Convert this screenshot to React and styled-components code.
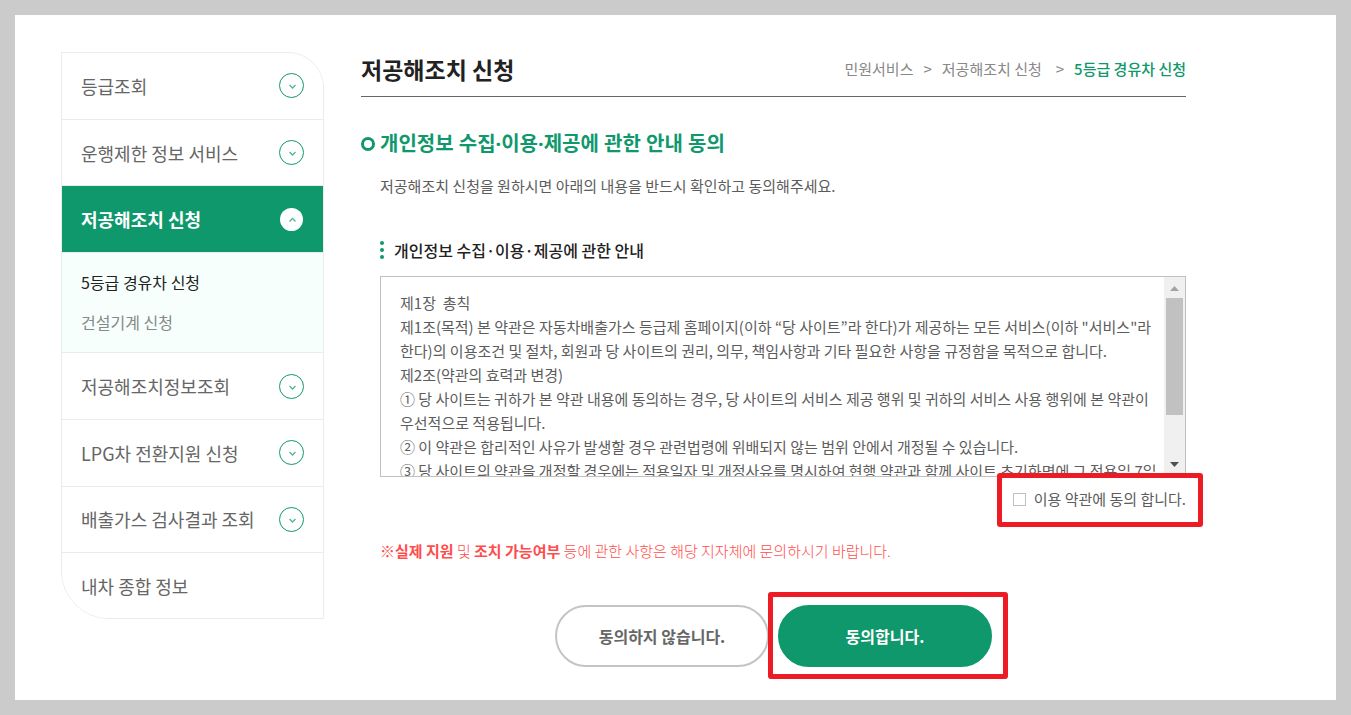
import React, { useState } from 'react'
import styled, { createGlobalStyle } from 'styled-components'

const menus = [
  { name: '등급조회', arrow: true },
  { name: '운행제한 정보 서비스', arrow: true },
  { name: '저공해조치 신청', arrow: true, subs: ['5등급 경유차 신청', '건설기계 신청'] },
  { name: '저공해조치정보조회', arrow: true },
  { name: 'LPG차 전환지원 신청', arrow: true },
  { name: '배출가스 검사결과 조회', arrow: true },
  { name: '내차 종합 정보', arrow: false },
]

const terms = [
  '제1장  총칙',
  '제1조(목적) 본 약관은 자동차배출가스 등급제 홈페이지(이하 “당 사이트”라 한다)가 제공하는 모든 서비스(이하 "서비스"라',
  '한다)의 이용조건 및 절차, 회원과 당 사이트의 권리, 의무, 책임사항과 기타 필요한 사항을 규정함을 목적으로 합니다.',
  '제2조(약관의 효력과 변경)',
  '① 당 사이트는 귀하가 본 약관 내용에 동의하는 경우, 당 사이트의 서비스 제공 행위 및 귀하의 서비스 사용 행위에 본 약관이',
  '우선적으로 적용됩니다.',
  '② 이 약관은 합리적인 사유가 발생할 경우 관련법령에 위배되지 않는 범위 안에서 개정될 수 있습니다.',
  '③ 당 사이트의 약관을 개정할 경우에는 적용일자 및 개정사유를 명시하여 현행 약관과 함께 사이트 초기화면에 그 적용일 7일',
]

const Arrow = ({ open }) => (
  <svg width="25" height="25" viewBox="0 0 25 25" fill="none" aria-hidden="true">
    <circle cx="12.5" cy="12.5" r={open ? 11.5 : 12} fill="#fff" stroke={open ? 'none' : '#10986d'} />
    <path d={open ? 'M10.5 14.5L13.5 11.5L16.5 14.5' : 'M10.5 12L13.5 15L16.5 12'} stroke="#4fb694" strokeWidth="1.3" />
  </svg>
)

const App = () => {
  const [agree, setAgree] = useState(false)

  return <>
    <GlobalStyle />
    <Page>
      <Sidebar>
        {menus.map(({ name, arrow, subs }) => (
          <React.Fragment key={name}>
            <MenuLink href="#" $active={!!subs}>
              {name}
              {arrow && <Arrow open={!!subs} />}
            </MenuLink>
            {subs && <SubMenu>
              {subs.map((sub, i) => <SubLink href="#" key={sub} $active={i === 0}>{sub}</SubLink>)}
            </SubMenu>}
          </React.Fragment>
        ))}
      </Sidebar>
      <Main>
        <Header>
          <h1>저공해조치 신청</h1>
          <Breadcrumb>
            <a href="#">민원서비스</a>
            <span>&gt;</span>
            <a href="#">저공해조치 신청</a>
            <span className="last">&gt;</span>
            <a href="#" className="current">5등급 경유차 신청</a>
          </Breadcrumb>
        </Header>
        <Heading>
          <svg width="14" height="14" viewBox="0 0 14 14" aria-hidden="true">
            <circle cx="7" cy="7" r="5.5" fill="none" stroke="#10986d" strokeWidth="3" />
          </svg>
          개인정보 수집·이용·제공에 관한 안내 동의
        </Heading>
        <Content>
          <Intro>저공해조치 신청을 원하시면 아래의 내용을 반드시 확인하고 동의해주세요.</Intro>
          <SubHeading>
            <svg width="4" height="18" viewBox="0 0 4 18" fill="#10986d" aria-hidden="true">
              <circle cx="2" cy="2" r="2" />
              <circle cx="2" cy="9" r="2" />
              <circle cx="2" cy="16" r="2" />
            </svg>
            개인정보 수집·이용·제공에 관한 안내
          </SubHeading>
          <TermsBox>
            <TermsText tabIndex={0}>
              {terms.map(line => <p key={line}>{line}</p>)}
            </TermsText>
            <ScrollBar aria-hidden="true">
              <svg width="9" height="5" viewBox="0 0 9 5"><path d="M0 5L4.5 0L9 5Z" fill="#a3a3a3" /></svg>
              <Thumb />
              <svg width="9" height="5" viewBox="0 0 9 5"><path d="M0 0L4.5 5L9 0Z" fill="#505050" /></svg>
            </ScrollBar>
          </TermsBox>
          <AgreeRow>
            <AgreeLabel htmlFor="agree">
              <input id="agree" type="checkbox" checked={agree} onChange={e => setAgree(e.target.checked)} />
              이용 약관에 동의 합니다.
            </AgreeLabel>
          </AgreeRow>
          <Notice>※<b>실제 지원</b> 및 <b>조치 가능여부</b> 등에 관한 사항은 해당 지자체에 문의하시기 바랍니다.</Notice>
        </Content>
        <Buttons>
          <Button type="button">동의하지 않습니다.</Button>
          <Marked>
            <Button type="button" $primary>동의합니다.</Button>
          </Marked>
        </Buttons>
      </Main>
    </Page>
  </>
}

const GlobalStyle = createGlobalStyle`
  * {
    box-sizing: border-box;
    margin: 0;
    padding: 0;
  }
  body {
    background: #cbcbcb;
    color: #5c5c5c;
    font-family: 'Noto Sans CJK KR', 'Noto Sans', sans-serif;
    font-size: 15px;
    line-height: 24px;
  }
  a {
    color: inherit;
    text-decoration: none;
  }
`

const Page = styled.div`
  display: flex;
  align-items: flex-start;
  gap: 37px;
  min-height: calc(100vh - 30px);
  margin: 15px;
  padding: 37px 150px 32px 46px;
  background: #fff;
`

const Sidebar = styled.nav`
  display: flex;
  flex-direction: column;
  flex: none;
  width: 263px;
  min-height: 567px;
  border: 1px solid #ebebeb;
  border-radius: 0 36px 0 48px;
  overflow: hidden;
`

const MenuLink = styled.a`
  display: flex;
  flex: 1;
  align-items: center;
  justify-content: space-between;
  padding: 0 19px;
  font-size: 18px;
  font-weight: ${({ $active }) => $active ? 700 : 400};
  color: ${({ $active }) => $active ? '#fff' : '#666'};
  background: ${({ $active }) => $active ? '#10986d' : '#fff'};
  border-bottom: 1px solid #ebebeb;
  &:last-child {
    border-bottom: 0;
  }
`

const SubMenu = styled.div`
  display: flex;
  flex-direction: column;
  gap: 16px;
  padding: 17px 19px 18px;
  background: #f6fffc;
  border-bottom: 1px solid #ebebeb;
`

const SubLink = styled.a`
  font-size: 16px;
  color: ${({ $active }) => $active ? '#222' : '#888'};
`

const Main = styled.main`
  flex: 1;
  min-width: 0;
`

const Header = styled.header`
  display: flex;
  justify-content: space-between;
  align-items: flex-start;
  height: 45px;
  border-bottom: 1px solid #666;
  h1 {
    font-size: 23px;
    line-height: 34px;
    font-weight: 700;
    color: #222;
  }
`

const Breadcrumb = styled.nav`
  display: flex;
  gap: 10px;
  line-height: 34px;
  color: #888;
  .last {
    margin-left: 4px;
  }
  .current {
    color: #10986d;
    font-weight: 500;
  }
`

/* Noto Sans first, its middle dot is the narrow one */
const Heading = styled.h2`
  display: flex;
  align-items: center;
  gap: 5px;
  margin-top: 32px;
  font-family: 'Noto Sans', 'Noto Sans CJK KR', sans-serif;
  font-size: 20px;
  line-height: 30px;
  font-weight: 700;
  color: #10986d;
`

const Content = styled.section`
  padding-left: 19px;
`

const Intro = styled.p`
  margin-top: 15px;
`

const SubHeading = styled.h3`
  display: flex;
  align-items: center;
  gap: 10px;
  margin: 40px 0 14px;
  font-size: 16px;
  line-height: 24px;
  font-weight: 500;
  color: #222;
`

const TermsBox = styled.div`
  display: flex;
  height: 201px;
  border: 1px solid #c0c0c0;
`

const TermsText = styled.div`
  flex: 1;
  min-width: 0;
  padding: 14px 0 0 19px;
  overflow: hidden;
  white-space: pre-wrap;
`

const ScrollBar = styled.div`
  display: flex;
  flex-direction: column;
  align-items: center;
  width: 21px;
  padding: 9px 0;
  background: #f0f0f0;
  svg:last-child {
    margin-top: auto;
  }
`

const Thumb = styled.div`
  width: 17px;
  height: 117px;
  margin-top: 7px;
  background: #c1c1c1;
`

const AgreeRow = styled.div`
  display: flex;
  justify-content: flex-end;
  margin-top: 10px;
`

/* red outline lying over the neighbouring content */
const outline = `
  position: relative;
  &::after {
    content: '';
    position: absolute;
    border: 5px solid #ed1c24;
    border-radius: 3px;
    pointer-events: none;
  }
`

const AgreeLabel = styled.label`
  display: flex;
  align-items: center;
  gap: 8px;
  ${outline}
  &::after {
    inset: -14px -17px -16px -16px;
  }
  input {
    appearance: none;
    width: 13px;
    height: 13px;
    background: #fff;
    border: 1px solid #c0c0c0;
  }
  input:checked {
    background: #10986d;
  }
`

const Notice = styled.p`
  margin-top: 28px;
  font-weight: 300;
  color: #ff4c4c;
  b {
    font-weight: 700;
  }
`

const Buttons = styled.div`
  display: flex;
  justify-content: center;
  gap: 9px;
  margin-top: 42px;
`

const Marked = styled.div`
  ${outline}
  &::after {
    inset: -13px -16px -12px -10px;
  }
`

const Button = styled.button`
  width: 214px;
  height: 62px;
  font-family: inherit;
  font-size: 16px;
  font-weight: 700;
  color: ${({ $primary }) => $primary ? '#fff' : '#666'};
  background: ${({ $primary }) => $primary ? '#10986d' : '#fff'};
  border: 2px solid ${({ $primary }) => $primary ? '#10986d' : '#c4c4c4'};
  border-radius: 31px;
  cursor: pointer;
`

export default App
